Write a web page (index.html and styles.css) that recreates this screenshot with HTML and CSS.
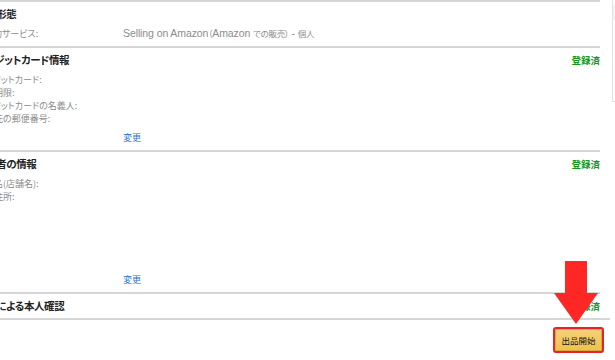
FILE: index.html
```html
<!DOCTYPE html>
<html lang="ja">
<head>
<meta charset="utf-8">
<title>出品情報の確認</title>
<link rel="stylesheet" href="styles.css">
</head>
<body>
<div class="page">
  <main class="main">
    <section class="sec">
      <div class="sec-head"><h2>出品形態</h2></div>
      <div class="rows">
        <div class="row"><span class="lbl">ご契約サービス:</span><span class="val">Selling on Amazon<span class="ja">（</span>Amazon <span class="ja">での販売）</span> - <span class="ja">個人</span></span></div>
      </div>
    </section>
    <section class="sec">
      <div class="sec-head"><h2>クレジットカード情報</h2><span class="ok">登録済</span></div>
      <div class="rows">
        <div class="row"><span class="lbl">クレジットカード:</span><span class="val"></span></div>
        <div class="row"><span class="lbl">有効期限:</span><span class="val"></span></div>
        <div class="row"><span class="lbl">クレジットカードの名義人:</span><span class="val"></span></div>
        <div class="row"><span class="lbl">請求先の郵便番号:</span><span class="val"></span></div>
      </div>
      <div class="row edit"><span class="lbl"></span><a class="link" href="#">変更</a></div>
    </section>
    <section class="sec">
      <div class="sec-head"><h2>出品者の情報</h2><span class="ok">登録済</span></div>
      <div class="rows rows-tall">
        <div class="row"><span class="lbl">表示名(店舗名):</span><span class="val"></span></div>
        <div class="row"><span class="lbl">登録住所:</span><span class="val"></span></div>
      </div>
      <div class="row edit"><span class="lbl"></span><a class="link" href="#">変更</a></div>
    </section>
    <section class="sec sec-last">
      <div class="sec-head"><h2>電話による本人確認</h2><span class="ok">登録済</span></div>
    </section>
    <div class="footer">
      <button class="cta" type="button">出品開始</button>
    </div>
  </main>
  <aside class="side"><div class="side-head"></div></aside>
  <svg class="arrow" width="46" height="64" viewBox="0 0 46 64" aria-hidden="true">
    <polygon points="12,0 34,0 34,32 45,32 23,63 1,32 12,32" fill="#ff2626"/>
  </svg>
</div>
</body>
</html>
```

FILE: styles.css
```css
html, body {
  margin: 0;
  padding: 0;
  background: #fff;
  overflow: hidden;
}
body {
  font-family: "Noto Sans CJK JP", sans-serif;
  font-feature-settings: "palt" 1;
  color: #333;
}
.page {
  position: relative;
  display: flex;
  align-items: flex-start;
  width: 615px;
  height: 360px;
}
.main {
  flex: none;
  width: 634px;
  margin-left: -24px;
}
.sec {
  margin-right: 10px;
  border-top: 2px solid #d6d6d6;
  padding: 4px 0 6px;
}
.sec-head {
  display: flex;
  justify-content: space-between;
  align-items: center;
  height: 16px;
  margin-bottom: 5px;
}
.sec-head h2 {
  margin: 0;
  font-size: 10.5px;
  font-weight: bold;
  color: #222;
  line-height: 16px;
  letter-spacing: -0.4px;
}
.ok {
  font-size: 9.5px;
  font-weight: bold;
  color: #11991a;
  line-height: 16px;
}
.sec-last {
  padding-bottom: 4px;
}
.sec-last .sec-head {
  margin-bottom: 0;
}
.rows-tall {
  min-height: 90px;
}
.row {
  display: grid;
  grid-template-columns: 147px 1fr;
  font-size: 9px;
  line-height: 13px;
  min-height: 13px;
  color: #8c8c8c;
}
.lbl {
  white-space: nowrap;
}
.val {
  white-space: nowrap;
  font-family: "Liberation Sans", "Noto Sans CJK JP", sans-serif;
  font-size: 10.5px;
  letter-spacing: -0.1px;
}
.val .ja {
  font-family: "Noto Sans CJK JP", sans-serif;
  font-size: 8.5px;
  letter-spacing: -0.3px;
}
.edit {
  margin-top: 6px;
}
.link {
  color: #2a72d0;
  text-decoration: none;
  font-size: 9px;
}
.footer {
  border-top: 2px solid #d6d6d6;
  display: flex;
  justify-content: flex-end;
  padding: 7px 6px 0 0;
}
.cta {
  width: 51px;
  height: 26px;
  padding: 0;
  border: 2px solid #e8222a;
  border-radius: 3px;
  background: linear-gradient(#f4d27c, #efc14a);
  box-shadow: inset 0 0 0 1px #d9ab3c;
  font-family: "Noto Sans CJK JP", sans-serif;
  font-size: 8.5px;
  color: #111;
  line-height: 22px;
}
.side {
  flex: none;
  width: 40px;
  height: 96px;
  margin-left: 2px;
  margin-top: -2px;
  border: 1px solid #e2e2e2;
  padding-top: 6px;
}
.side-head {
  height: 15px;
  background: #f4f4f4;
}
.arrow {
  position: absolute;
  left: 553px;
  top: 261px;
}
```
